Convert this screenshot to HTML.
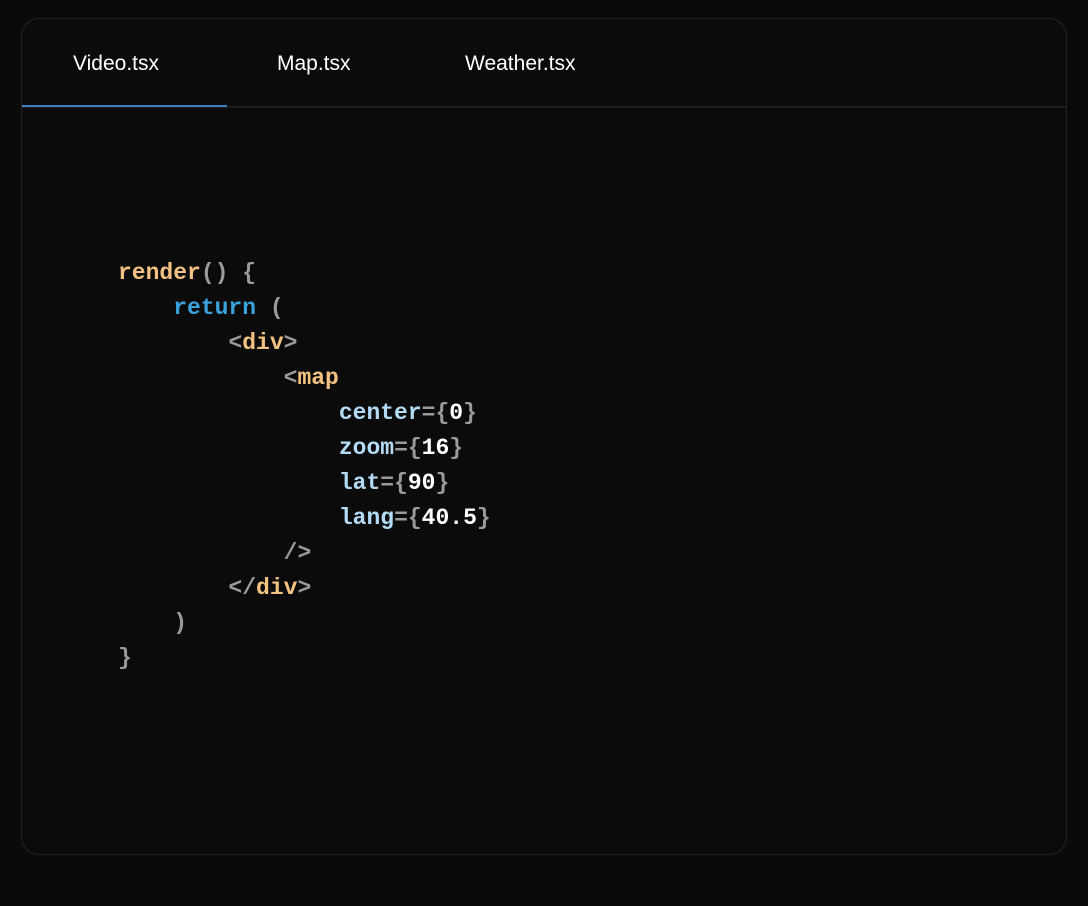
<!DOCTYPE html>
<html><head><style>
body{margin:0;background:#0a0a0a;width:1088px;height:906px;overflow:hidden}
.card{position:absolute;left:21px;top:18px;width:1044px;height:835px;border:1px solid #222;border-radius:18px;background:#0b0b0b}
.tabs{position:absolute;left:0;top:0;right:0;height:87px;border-bottom:2px solid #1e1e1e}
.tab{position:absolute;top:33px;font:500 21px "Liberation Sans",sans-serif;color:#fff}
.ul{position:absolute;left:0;top:86px;width:205px;height:2px;background:#3b7fc0}
pre{position:absolute;left:96px;top:237px;margin:0;font:bold 23px/35px "Liberation Mono",monospace;color:#fff}
.o{color:#f3c283}.b{color:#3ba2dc}.g{color:#9a9a9a}.a{color:#b4dbf5}
</style></head><body>
<div class="card">
<div class="tabs">
<span class="tab" style="left:51px">Video.tsx</span>
<span class="tab" style="left:255px">Map.tsx</span>
<span class="tab" style="left:443px">Weather.tsx</span>
<div class="ul"></div>
</div>
<pre><span class="o">render</span><span class="g">() {</span>
    <span class="b">return</span> <span class="g">(</span>
        <span class="g">&lt;</span><span class="o">div</span><span class="g">&gt;</span>
            <span class="g">&lt;</span><span class="o">map</span>
                <span class="a">center</span><span class="g">={</span>0<span class="g">}</span>
                <span class="a">zoom</span><span class="g">={</span>16<span class="g">}</span>
                <span class="a">lat</span><span class="g">={</span>90<span class="g">}</span>
                <span class="a">lang</span><span class="g">={</span>40.5<span class="g">}</span>
            <span class="g">/&gt;</span>
        <span class="g">&lt;/</span><span class="o">div</span><span class="g">&gt;</span>
    <span class="g">)</span>
<span class="g">}</span></pre>
</div>
</body></html>
